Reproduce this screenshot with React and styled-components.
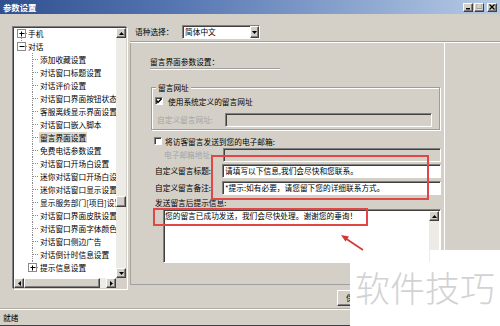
import React from 'react';
import styled, { createGlobalStyle, css } from 'styled-components';

const Global = createGlobalStyle`
  html, body { margin: 0; padding: 0; background: #d4d0c8; }
  body {
    font-family: "Noto Sans CJK SC", "Liberation Sans", sans-serif;
    font-size: 7.7px;
    color: #000;
  }
  * { box-sizing: border-box; }
`;

const raised = css`
  background: #d4d0c8;
  border: 1px solid;
  border-color: #fff #404040 #404040 #fff;
  box-shadow: inset -1px -1px #808080;
`;

const sunken = css`
  border: 1px solid;
  border-color: #808080 #fff #fff #808080;
  box-shadow: inset 1px 1px #404040;
`;

const Window = styled.div`
  position: relative;
  width: 500px;
  height: 326px;
  display: flex;
  flex-direction: column;
  background: #d4d0c8;
  overflow: hidden;
`;

const TitleBar = styled.div`
  height: 14px;
  flex: none;
  display: flex;
  align-items: center;
  justify-content: space-between;
  padding: 0 3px;
  background: linear-gradient(to right, #2f4f8f, #5676b2 35%, #b6cbe6);
  color: #fff;
  font-weight: bold;
  font-size: 8.4px;
  line-height: 14px;
`;

const TitleButtons = styled.div`
  display: flex;
  gap: 1px;
`;

const WinBtn = styled.div`
  ${raised};
  width: 10px;
  height: 9px;
  display: flex;
  align-items: center;
  justify-content: center;
  margin-left: ${(p) => (p.$gap ? '2px' : '0')};
`;

const Main = styled.div`
  flex: 1;
  display: flex;
  min-height: 0;
`;

const LeftCol = styled.div`
  flex: none;
  padding: 13px 3px 0 13px;
`;

const Tree = styled.div`
  width: 114px;
  height: 262px;
  background: #fff;
  border: 1px solid;
  border-color: #404040 #d4d0c8 #d4d0c8 #404040;
  box-shadow: -1px -1px 0 #808080, 1px 1px 0 #fff;
  display: grid;
  grid-template-columns: 102px 10px;
  grid-template-rows: 250px 10px;
`;

const TreeView = styled.div`
  overflow: hidden;
`;

const TreeList = styled.div`
  margin-top: -1px;
  display: flex;
  flex-direction: column;
`;

const TreeRow = styled.div`
  height: 13px;
  display: flex;
  align-items: center;
  white-space: nowrap;
`;

const GutterSvg = styled.svg`
  flex: none;
  display: block;
`;

const TreeText = styled.span`
  flex: none;
  padding: 0 1px;
  line-height: 11px;
  background: ${(p) => (p.$selected ? '#dad8d3' : 'transparent')};
`;

const VScroll = styled.div`
  display: flex;
  flex-direction: column;
  background: #ecebe6;
`;

const HScroll = styled.div`
  display: flex;
  background: #ecebe6;
`;

const ScrollBtn = styled.div`
  ${raised};
  width: 10px;
  height: 10px;
  flex: none;
  display: flex;
  align-items: center;
  justify-content: center;
`;

const VTrack = styled.div`
  flex: 1;
  display: flex;
  flex-direction: column;
`;

const HTrack = styled.div`
  flex: 1;
  display: flex;
`;

const Thumb = styled.div`
  ${raised};
  flex: none;
  width: ${(p) => p.$w}px;
  height: ${(p) => p.$h}px;
  margin-top: ${(p) => p.$top || 0}px;
`;

const Corner = styled.div`
  background: #d4d0c8;
`;

const RightCol = styled.div`
  flex: 1;
  display: flex;
  flex-direction: column;
`;

const LangRow = styled.div`
  height: 27px;
  flex: none;
  display: flex;
  align-items: flex-start;
  padding: 11px 0 0 5px;
`;

const LangLabel = styled.span`
  width: 47px;
  line-height: 14px;
`;

const Select = styled.div`
  ${sunken};
  width: 78px;
  height: 14px;
  background: #fff;
  display: flex;
  justify-content: space-between;
`;

const SelectText = styled.span`
  padding-left: 2px;
  line-height: 12px;
`;

const DropBtn = styled.div`
  ${raised};
  width: 9px;
  height: 12px;
  display: flex;
  align-items: center;
  justify-content: center;
`;

const Separator = styled.div`
  height: 2px;
  flex: none;
  border-top: 1px solid #a0a0a0;
  border-bottom: 1px solid #fff;
`;

const ContentRow = styled.div`
  height: 242px;
  flex: none;
  display: flex;
`;

const Panel = styled.div`
  width: 315px;
  height: 100%;
  border-left: 1px solid #a8a49c;
  border-right: 1px solid #fff;
  border-bottom: 1px solid #a0a0a0;
  padding-left: 19px;
  display: flex;
  flex-direction: column;
  align-items: flex-start;
`;

const Header = styled.div`
  margin-top: 13px;
  height: 13px;
  width: 130px;
  line-height: 12px;
  border-bottom: 1px solid #a0a0a0;
  box-shadow: 0 1px #fff;
`;

const Group = styled.div`
  position: relative;
  margin: 18px 0 0 1px;
  width: 289px;
  height: 43px;
  border: 1px solid #a09c94;
  box-shadow: inset 1px 1px #fff, 1px 1px #fff;
  padding-left: 3px;
  display: flex;
  flex-direction: column;
  align-items: flex-start;
`;

const Legend = styled.span`
  position: absolute;
  top: -5px;
  left: 4px;
  padding: 0 2px;
  line-height: 10px;
  background: #d4d0c8;
`;

const CheckRow = styled.div`
  height: 14px;
  display: flex;
  align-items: center;
  gap: ${(p) => p.$gap}px;
  margin: ${(p) => p.$m};
`;

const Box = styled.div`
  ${sunken};
  width: 8px;
  height: 8px;
  background: #fff;
  display: flex;
  align-items: center;
  justify-content: center;
`;

const FieldRow = styled.div`
  display: grid;
  grid-template-columns: ${(p) => p.$cols};
  align-items: center;
  margin: ${(p) => p.$m};
`;

const FieldLabel = styled.span`
  line-height: 12px;
  white-space: nowrap;
  padding-left: ${(p) => p.$indent || 0}px;
  color: ${(p) => (p.$disabled ? '#a4a4a4' : '#000')};
`;

const Input = styled.div`
  ${sunken};
  height: 14px;
  background: ${(p) => (p.$disabled ? '#d4d0c8' : '#fff')};
  padding-left: 2px;
  line-height: 12px;
  white-space: nowrap;
  overflow: hidden;
`;

const PromptLabel = styled.div`
  margin: 2px 0 0 5px;
  line-height: 12px;
`;

const TextArea = styled.div`
  ${sunken};
  margin-left: 13px;
  width: 278px;
  height: 54px;
  background: #fff;
  display: flex;
`;

const TextBody = styled.div`
  flex: 1;
  padding-left: 1px;
  line-height: 12px;
  white-space: nowrap;
`;

const AreaScroll = styled.div`
  width: 10px;
  background: #ecebe6;
  margin: 1px 1px 0 0;
`;

const BottomRow = styled.div`
  height: 24px;
  flex: none;
  padding: 5px 0 0 207px;
`;

const Button = styled.div`
  ${raised};
  width: 40px;
  height: 16px;
  padding-left: 8px;
  line-height: 14px;
`;

const StatusBar = styled.div`
  height: 17px;
  flex: none;
  border-top: 1px solid #fff;
  box-shadow: 0 -1px #b0aca4;
  border-bottom: 1px solid #404040;
  padding-left: 3px;
  line-height: 15px;
`;

const Mark = styled.div`
  position: absolute;
  border: 2px solid #e04848;
  left: ${(p) => p.$x}px;
  top: ${(p) => p.$y}px;
  width: ${(p) => p.$w}px;
  height: ${(p) => p.$h}px;
`;

const ArrowSvg = styled.svg`
  position: absolute;
  left: 336px;
  top: 230px;
`;

const WhitePatch = styled.div`
  position: absolute;
  background: #fff;
  left: ${(p) => p.$x}px;
  top: ${(p) => p.$y}px;
  width: ${(p) => p.$w}px;
  height: ${(p) => p.$h}px;
`;

const Watermark = styled.div`
  position: absolute;
  left: 355px;
  top: 269px;
  font-size: 35px;
  line-height: 35px;
  font-weight: 300;
  color: #d2d2d2;
  white-space: nowrap;
`;

const dot = { stroke: '#8a8a8a', strokeDasharray: '1 1', strokeWidth: 1 };

function Expander({ cx, cy, plus }) {
  return (
    <g>
      <rect x={cx - 4} y={cy - 4} width="8" height="8" fill="#fff" stroke="#8a8a8a" />
      <line x1={cx - 2} y1={cy} x2={cx + 3} y2={cy} stroke="#000" />
      {plus && <line x1={cx} y1={cy - 2} x2={cx} y2={cy + 3} stroke="#000" />}
    </g>
  );
}

function Gutter({ kind }) {
  if (kind === 'root-plus' || kind === 'root-minus') {
    return (
      <GutterSvg width="13" height="13">
        {kind === 'root-plus' ? (
          <line x1="7.5" y1="11" x2="7.5" y2="13" {...dot} />
        ) : (
          <line x1="7.5" y1="0" x2="7.5" y2="3" {...dot} />
        )}
        <line x1="12" y1="6.5" x2="13" y2="6.5" {...dot} />
        <Expander cx={7.5} cy={6.5} plus={kind === 'root-plus'} />
      </GutterSvg>
    );
  }
  if (kind === 'child-plus') {
    return (
      <GutterSvg width="25" height="13">
        <line x1="18.5" y1="0" x2="18.5" y2="3" {...dot} />
        <line x1="23" y1="6.5" x2="25" y2="6.5" {...dot} />
        <Expander cx={18.5} cy={6.5} plus />
      </GutterSvg>
    );
  }
  return (
    <GutterSvg width="25" height="13">
      <line x1="18.5" y1="0" x2="18.5" y2="13" {...dot} />
      <line x1="19" y1="6.5" x2="25" y2="6.5" {...dot} />
    </GutterSvg>
  );
}

function Tri({ dir }) {
  const pts = {
    up: '0,3 2.5,0 5,3',
    down: '0,0 5,0 2.5,3',
    left: '3,0 3,5 0,2.5',
    right: '0,0 0,5 3,2.5',
  }[dir];
  const horiz = dir === 'left' || dir === 'right';
  return (
    <svg width={horiz ? 3 : 5} height={horiz ? 5 : 3}>
      <polygon points={pts} fill="#000" />
    </svg>
  );
}

function Check() {
  return (
    <svg width="6" height="6" viewBox="0 0 6 6">
      <polyline points="0.5,2.5 2,4.5 5.5,0.8" fill="none" stroke="#000" strokeWidth="1.4" />
    </svg>
  );
}

const treeItems = [
  { kind: 'root-plus', text: '手机' },
  { kind: 'root-minus', text: '对话' },
  { text: '添加收藏设置' },
  { text: '对话窗口标题设置' },
  { text: '对话评价设置' },
  { text: '对话窗口界面按钮状态' },
  { text: '客服离线显示界面设置' },
  { text: '对话窗口嵌入脚本' },
  { text: '留言界面设置', selected: true },
  { text: '免费电话参数设置' },
  { text: '对话窗口开场白设置' },
  { text: '迷你对话窗口开场白设置' },
  { text: '迷你对话窗口显示设置' },
  { text: '显示服务部门[项目]设置' },
  { text: '对话窗口界面皮肤设置' },
  { text: '对话窗口界面字体颜色' },
  { text: '对话窗口侧边广告' },
  { text: '对话倒计时信息设置' },
  { kind: 'child-plus', text: '提示信息设置' },
];

export default function App() {
  return (
    <>
      <Global />
      <Window>
        <TitleBar>
          <span>参数设置</span>
          <TitleButtons>
            <WinBtn>
              <svg width="6" height="6">
                <rect x="1" y="4" width="4" height="1.5" fill="#000" />
              </svg>
            </WinBtn>
            <WinBtn>
              <svg width="7" height="6">
                <rect x="1.5" y="0.5" width="5" height="4.5" fill="none" stroke="#fff" />
                <rect x="1" y="0" width="5" height="4.5" fill="none" stroke="#9a9a9a" />
              </svg>
            </WinBtn>
            <WinBtn $gap>
              <svg width="6" height="6">
                <path d="M0.5 0.5 L5.5 5.5 M5.5 0.5 L0.5 5.5" stroke="#000" strokeWidth="1.3" />
              </svg>
            </WinBtn>
          </TitleButtons>
        </TitleBar>

        <Main>
          <LeftCol>
            <Tree>
              <TreeView>
                <TreeList>
                  {treeItems.map((it) => (
                    <TreeRow key={it.text}>
                      <Gutter kind={it.kind} />
                      <TreeText $selected={it.selected}>{it.text}</TreeText>
                    </TreeRow>
                  ))}
                </TreeList>
              </TreeView>
              <VScroll>
                <ScrollBtn>
                  <Tri dir="up" />
                </ScrollBtn>
                <VTrack>
                  <Thumb $w={10} $h={11} $top={158} />
                </VTrack>
                <ScrollBtn>
                  <Tri dir="down" />
                </ScrollBtn>
              </VScroll>
              <HScroll>
                <ScrollBtn>
                  <Tri dir="left" />
                </ScrollBtn>
                <HTrack>
                  <Thumb $w={76} $h={10} />
                </HTrack>
                <ScrollBtn>
                  <Tri dir="right" />
                </ScrollBtn>
              </HScroll>
              <Corner />
            </Tree>
          </LeftCol>

          <RightCol>
            <LangRow>
              <LangLabel>语种选择：</LangLabel>
              <Select>
                <SelectText>简体中文</SelectText>
                <DropBtn>
                  <Tri dir="down" />
                </DropBtn>
              </Select>
            </LangRow>
            <Separator />
            <ContentRow>
              <Panel>
                <Header>留言界面参数设置：</Header>
                <Group>
                  <Legend>留言网址</Legend>
                  <CheckRow $gap={5} $m="6px 0 0 0">
                    <Box>
                      <Check />
                    </Box>
                    <span>使用系统定义的留言网址</span>
                  </CheckRow>
                  <FieldRow $cols="68px 207px" $m="5px 0 0 2px">
                    <FieldLabel $disabled>自定义留言网址:</FieldLabel>
                    <Input $disabled />
                  </FieldRow>
                </Group>
                <CheckRow $gap={3} $m="4px 0 0 4px">
                  <Box />
                  <span>将访客留言发送到您的电子邮箱:</span>
                </CheckRow>
                <FieldRow $cols="68px 218px" $m="0 0 0 5px">
                  <FieldLabel $disabled $indent={9}>电子邮箱地址:</FieldLabel>
                  <Input $disabled />
                </FieldRow>
                <FieldRow $cols="67px 219px" $m="2px 0 0 5px">
                  <FieldLabel>自定义留言标题:</FieldLabel>
                  <Input>请填写以下信息,我们会尽快和您联系。</Input>
                </FieldRow>
                <FieldRow $cols="67px 219px" $m="3px 0 0 5px">
                  <FieldLabel>自定义留言备注:</FieldLabel>
                  <Input>*提示:如有必要，请您留下您的详细联系方式。</Input>
                </FieldRow>
                <PromptLabel>发送留言后提示信息:</PromptLabel>
                <TextArea>
                  <TextBody>您的留言已成功发送，我们会尽快处理。谢谢您的垂询！</TextBody>
                  <AreaScroll>
                    <ScrollBtn>
                      <Tri dir="up" />
                    </ScrollBtn>
                  </AreaScroll>
                </TextArea>
              </Panel>
            </ContentRow>
            <BottomRow>
              <Button>保存</Button>
            </BottomRow>
          </RightCol>
        </Main>

        <StatusBar>就绪</StatusBar>

        <Mark $x={211} $y={155} $w={218} $h={45} />
        <Mark $x={153} $y={208} $w={215} $h={18} />
        <ArrowSvg width="30" height="24">
          <line x1="27" y1="20" x2="9" y2="8" stroke="#d83434" strokeWidth="1.6" />
          <polygon points="5,5 13,6.5 9.5,11.5" fill="#d83434" />
        </ArrowSvg>

        <WhitePatch $x={430} $y={250} $w={70} $h={13} />
        <WhitePatch $x={350} $y={263} $w={150} $h={63} />
        <Watermark>软件技巧</Watermark>
      </Window>
    </>
  );
}
